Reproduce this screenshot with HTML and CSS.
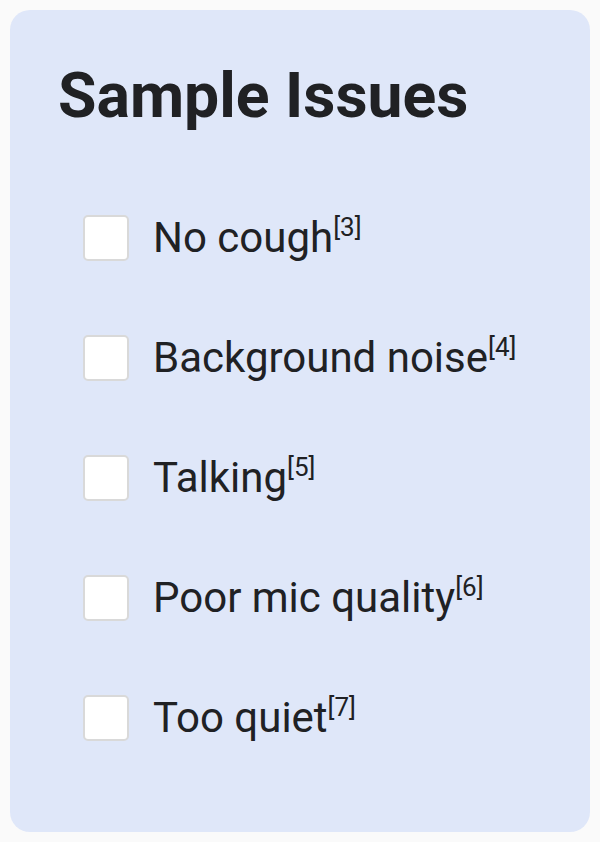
FILE: index.html
```html
<!DOCTYPE html>
<html>
<head>
<meta charset="utf-8">
<link rel="stylesheet" href="styles.css">
</head>
<body>
<div class="card">
  <h1 class="title">Sample Issues</h1>
  <ul class="list">
    <li class="item"><span class="box"></span><span class="label">No cough<sup class="ref">[3]</sup></span></li>
    <li class="item"><span class="box"></span><span class="label">Background noise<sup class="ref">[4]</sup></span></li>
    <li class="item"><span class="box"></span><span class="label">Talking<sup class="ref">[5]</sup></span></li>
    <li class="item"><span class="box"></span><span class="label">Poor mic quality<sup class="ref">[6]</sup></span></li>
    <li class="item"><span class="box"></span><span class="label">Too quiet<sup class="ref">[7]</sup></span></li>
  </ul>
</div>
</body>
</html>
```
FILE: styles.css
```css
html, body {
  margin: 0;
  padding: 0;
  background: #fafafa;
}
body {
  padding: 10px;
  font-family: Roboto, "Noto Sans", sans-serif;
  color: #202124;
}
.card {
  background: #dfe7f9;
  border-radius: 20px;
  height: 822px;
  box-sizing: border-box;
  padding: 50px 50px 0 48px;
}
.title {
  margin: 0;
  font-size: 62.5px;
  font-weight: 700;
  line-height: 72px;
}
.list {
  list-style: none;
  margin: 0;
  padding: 0 0 0 25px;
  margin-top: 83px;
  display: flex;
  flex-direction: column;
  gap: 74px;
}
.item {
  display: flex;
  align-items: center;
  gap: 24px;
  height: 46px;
}
.box {
  width: 46px;
  height: 46px;
  box-sizing: border-box;
  background: #fff;
  border: 2px solid #d9d9d9;
  border-radius: 5px;
  flex: none;
}
.label {
  font-size: 42px;
  line-height: 46px;
}
.ref {
  font-size: 26px;
  line-height: 0;
  vertical-align: 0.62em;
}
```
